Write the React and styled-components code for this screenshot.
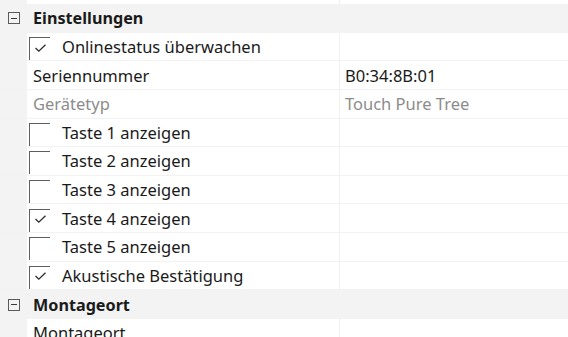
import React from 'react';
import styled, { createGlobalStyle } from 'styled-components';

const GlobalStyle = createGlobalStyle`
  html, body {
    margin: 0;
    padding: 0;
    background: #ffffff;
  }
  body {
    font-family: "Noto Sans", "Open Sans", sans-serif;
    overflow: hidden;
  }
`;

const rows = [
  { type: 'tail' },
  { type: 'group', label: 'Einstellungen' },
  { type: 'check', label: 'Onlinestatus überwachen', checked: true },
  { type: 'text', label: 'Seriennummer', value: 'B0:34:8B:01' },
  { type: 'text', label: 'Gerätetyp', value: 'Touch Pure Tree', disabled: true },
  { type: 'check', label: 'Taste 1 anzeigen', checked: false },
  { type: 'check', label: 'Taste 2 anzeigen', checked: false },
  { type: 'check', label: 'Taste 3 anzeigen', checked: false },
  { type: 'check', label: 'Taste 4 anzeigen', checked: true },
  { type: 'check', label: 'Taste 5 anzeigen', checked: false },
  { type: 'check', label: 'Akustische Bestätigung', checked: true },
  { type: 'group', label: 'Montageort' },
  { type: 'text', label: 'Montageort', value: '' },
];

const App = () => (
  <>
    <GlobalStyle />
    <Grid>
      {rows.map((row, i) => {
        if (row.type === 'tail') {
          return (
            <Row key={i} $height="4px">
              <Gutter />
              <NameCell />
              <ValueCell />
            </Row>
          );
        }
        if (row.type === 'group') {
          return (
            <GroupRow key={i}>
              <Gutter>
                <Collapse />
              </Gutter>
              <GroupLabel>{row.label}</GroupLabel>
            </GroupRow>
          );
        }
        return (
          <Row key={i}>
            <Gutter />
            <NameCell $disabled={row.disabled}>
              {row.type === 'check' && (
                <Box>
                  {row.checked && (
                    <svg width="13" height="10" viewBox="0 0 13 10">
                      <path d="M1.5 5 L4.8 8.2 L11.5 1.8" fill="none" stroke="#2b2b2b" strokeWidth="1.3" />
                    </svg>
                  )}
                </Box>
              )}
              <Label $indent={row.type === 'check'}>{row.label}</Label>
            </NameCell>
            <ValueCell $disabled={row.disabled}>{row.value}</ValueCell>
          </Row>
        );
      })}
    </Grid>
  </>
);

const Grid = styled.div`
  display: flex;
  flex-direction: column;
  width: 568px;
`;

const Row = styled.div`
  display: grid;
  grid-template-columns: 27px 313px 228px;
  height: ${p => p.$height || '28.6px'};
  box-sizing: border-box;
  border-bottom: ${p => (p.$height ? 'none' : '1px solid #f2f2f2')};
  font-size: 16.5px;
  color: #1a1a1a;
`;

const GroupRow = styled.div`
  display: grid;
  grid-template-columns: 27px 1fr;
  height: 28.8px;
  background: #f3f3f3;
  align-items: center;
`;

const Gutter = styled.div`
  background: #f3f3f3;
  display: flex;
  align-items: center;
  justify-content: center;
  padding-left: 1px;
  align-self: stretch;
`;

const Collapse = styled.span`
  position: relative;
  width: 12px;
  height: 12px;
  border: 1px solid #5a5a5a;
  box-sizing: border-box;

  &::after {
    content: '';
    position: absolute;
    left: 2px;
    right: 2px;
    top: 4.5px;
    height: 1px;
    background: #3a3a3a;
  }
`;

const GroupLabel = styled.div`
  font-size: 16.2px;
  font-weight: 700;
  color: #1a1a1a;
  padding-left: 6px;
`;

const NameCell = styled.div`
  display: flex;
  align-items: center;
  border-right: 1px solid #f0f0f0;
  padding-left: 6px;
  color: ${p => (p.$disabled ? '#8c8c8c' : 'inherit')};
  white-space: nowrap;
  overflow: hidden;
`;

const ValueCell = styled.div`
  display: flex;
  align-items: center;
  padding-left: 5px;
  color: ${p => (p.$disabled ? '#8c8c8c' : 'inherit')};
  white-space: nowrap;
`;

const Box = styled.span`
  flex: none;
  width: 21px;
  height: 23px;
  margin-top: 4px;
  margin-left: -4px;
  box-sizing: border-box;
  border-top: 1.5px solid #5e5e5e;
  border-left: 1.5px solid #5e5e5e;
  display: flex;
  align-items: center;
  justify-content: center;
  padding-bottom: 3px;
`;

const Label = styled.span`
  margin-left: ${p => (p.$indent ? '12px' : '0')};
`;

export default App;
